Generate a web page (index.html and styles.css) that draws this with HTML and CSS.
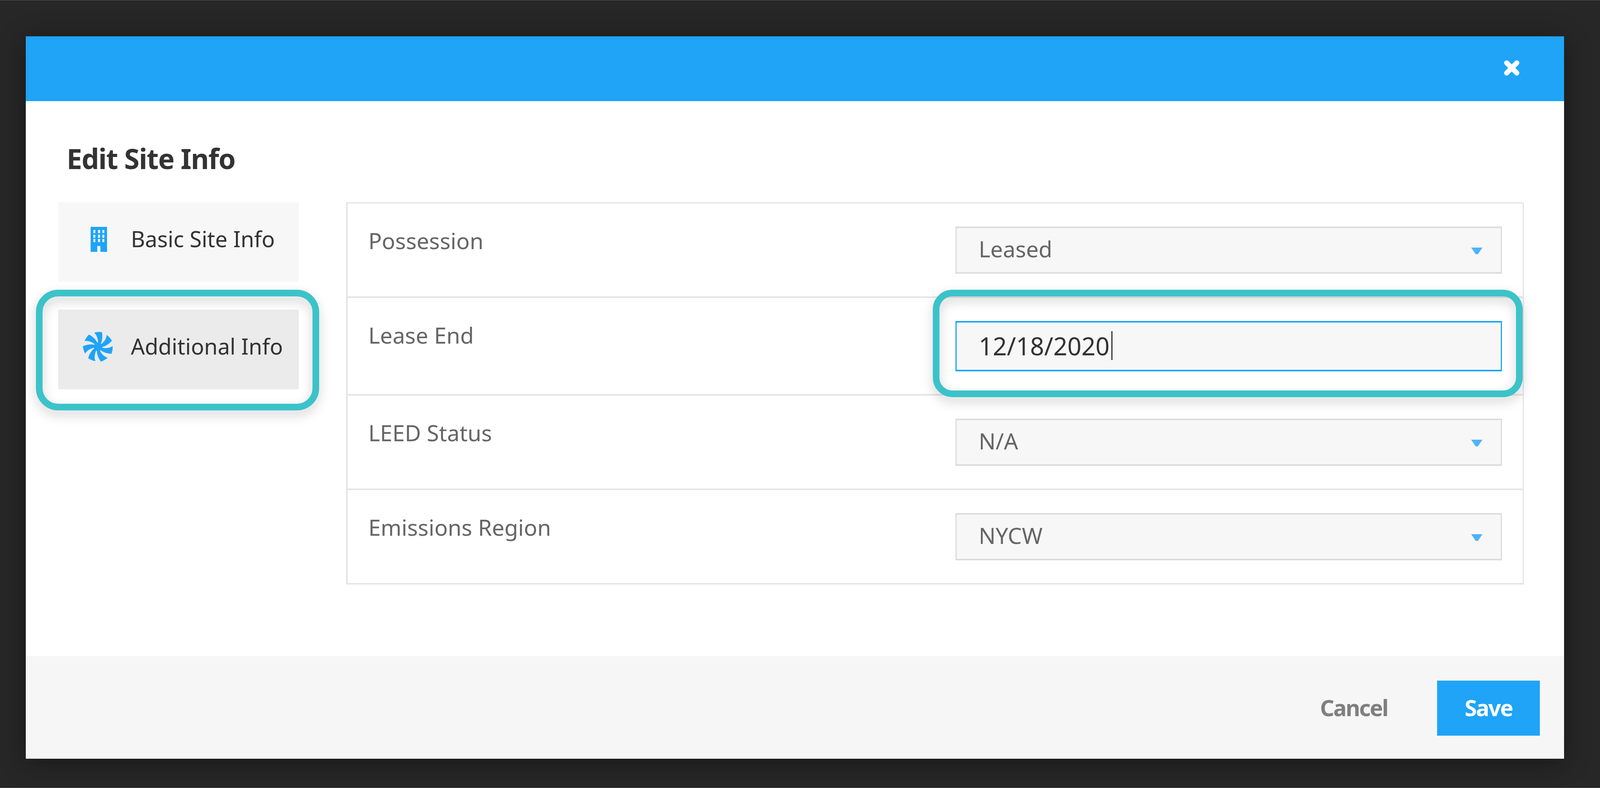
FILE: index.html
```html
<!DOCTYPE html>
<html lang="en">
<head>
    <meta charset="UTF-8">
    <meta name="viewport" content="width=device-width, initial-scale=1.0">
    <title>Edit Site Info</title>
    <link rel="stylesheet" href="styles.css">
</head>
<body>
    <div class="modal">
        <div class="modal-header">
            <svg class="close-icon" viewBox="0 0 40 40">
                <path d="M7 7L33 33M33 7L7 33" stroke="#fff" stroke-width="13" stroke-linecap="round"/>
            </svg>
        </div>

        <div class="modal-body">
            <h2 class="modal-title">Edit Site Info</h2>

            <div class="columns">
                <div class="side-nav">
                    <div class="nav-item">
                        <span class="nav-icon">
                            <svg class="icon-building" viewBox="0 0 42 64">
                                <path fill="#1fa4f8" fill-rule="evenodd" d="M0 0H42V64H25V49H17V64H0ZM7 8V16H12V8ZM19 8V16H24V8ZM30 8V16H35V8ZM7 20V28H12V20ZM19 20V28H24V20ZM30 20V28H35V20ZM7 31V39H12V31ZM19 31V39H24V31ZM30 31V39H35V31Z"/>
                            </svg>
                        </span>
                        <span>Basic Site Info</span>
                    </div>
                    <div class="nav-item nav-item-active">
                        <span class="nav-icon">
                            <svg class="icon-fan" viewBox="-39 -39 78 78">
                                <g fill="#1fa4f8">
                                    <circle r="11"/>
                                    <path id="blade" d="M-10 -36Q0 -39 10 -37.5C12 -26 11 -16 7 -8L0 -10C0 -20 -3 -30 -10 -36Z"/>
                                    <use href="#blade" transform="rotate(51.43)"/>
                                    <use href="#blade" transform="rotate(102.86)"/>
                                    <use href="#blade" transform="rotate(154.29)"/>
                                    <use href="#blade" transform="rotate(205.71)"/>
                                    <use href="#blade" transform="rotate(257.14)"/>
                                    <use href="#blade" transform="rotate(308.57)"/>
                                </g>
                            </svg>
                        </span>
                        <span>Additional Info</span>
                        <div class="callout callout-nav"></div>
                    </div>
                </div>

                <div class="form-table">
                    <div class="form-row">
                        <label>Possession</label>
                        <div class="field select-field">
                            <span>Leased</span>
                            <span class="arrow"></span>
                        </div>
                    </div>
                    <div class="form-row">
                        <label>Lease End</label>
                        <div class="field input-field">
                            <span>12/18/2020</span>
                            <span class="caret"></span>
                            <div class="callout callout-input"></div>
                        </div>
                    </div>
                    <div class="form-row">
                        <label>LEED Status</label>
                        <div class="field select-field">
                            <span>N/A</span>
                            <span class="arrow"></span>
                        </div>
                    </div>
                    <div class="form-row">
                        <label>Emissions Region</label>
                        <div class="field select-field">
                            <span>NYCW</span>
                            <span class="arrow"></span>
                        </div>
                    </div>
                </div>
            </div>
        </div>

        <div class="modal-footer">
            <button class="btn-cancel">Cancel</button>
            <button class="btn-save">Save</button>
        </div>
    </div>
</body>
</html>
```

FILE: styles.css
```css
* {
    box-sizing: border-box;
}

body {
    font-family: "Noto Sans", sans-serif;
    background-color: #272727;
    margin: 0;
    padding: 92px 2.24% 0 1.6%;
    height: 100vh;
    overflow: hidden;
    border-top: 1px solid #555;
    border-bottom: 1px solid #555;
    color: #333;
}

.modal {
    width: 100%;
    background-color: white;
    box-shadow: 0 8px 60px rgba(0, 0, 0, 0.4);
}

.modal-header {
    height: 166px;
    background-color: #1fa4f8;
    display: flex;
    align-items: center;
    justify-content: flex-end;
    padding-right: 2.89%;
}

.close-icon {
    width: 40px;
    height: 40px;
    margin-top: -5px;
}

.modal-body {
    height: 1421px;
    padding: 0 2.62% 0 2.13%;
}

.modal-title {
    margin: 0 0 0 0.56%;
    height: 259px;
    padding-top: 97px;
    font-size: 71px;
    line-height: 100px;
    letter-spacing: -1.5px;
    font-weight: 700;
    color: #333;
}

.columns {
    display: flex;
    justify-content: space-between;
    align-items: flex-start;
}

.side-nav {
    width: 16.42%;
    display: flex;
    flex-direction: column;
    gap: 71px;
}

.nav-item {
    position: relative;
    height: 204px;
    padding: 0 0 18px 10.4%;
    display: flex;
    align-items: center;
    font-size: 56px;
    background-color: #f7f7f7;
    border-radius: 4px;
}

.nav-item-active {
    background-color: #ebebeb;
}

.nav-icon {
    width: 80px;
    margin: 4px 7.5% 0 0;
    display: flex;
    justify-content: center;
}

.icon-building {
    width: 42px;
    height: 64px;
}

.icon-fan {
    width: 78px;
    height: 78px;
    margin-left: -4px;
}

.callout {
    position: absolute;
    border: 17px solid #3bc3c9;
    filter: drop-shadow(0 12px 14px rgba(0, 0, 0, 0.18));
}

.callout-nav {
    left: -9.4%;
    right: -8.4%;
    top: -51px;
    bottom: -54px;
    border-radius: 57px;
}

.callout-input {
    left: -4.4%;
    right: -4%;
    top: -84px;
    bottom: -70px;
    border-radius: 50px;
}

.form-table {
    width: 80.36%;
    border-top: 3px solid #e5e5e5;
    border-left: 4px solid #e5e5e5;
    border-right: 3px solid #e5e5e5;
}

.form-row {
    display: flex;
    justify-content: space-between;
    align-items: flex-start;
    padding: 59px 1.75% 58px;
    border-bottom: 4px solid #e5e5e5;
}

label {
    font-size: 57px;
    line-height: 72px;
    color: #666;
}

.field {
    position: relative;
    width: 48.2%;
    display: flex;
    align-items: center;
    padding-left: 1.93%;
    background-color: #f7f7f7;
    border-style: solid;
    border-width: 4px 3px;
}

.select-field {
    height: 121px;
    justify-content: space-between;
    padding-right: 1.63%;
    padding-bottom: 8px;
    border-color: #dcdcdc;
    font-size: 57px;
    color: #666;
}

.input-field {
    height: 129px;
    padding-bottom: 3px;
    border-color: #1fa4f8;
    font-size: 63px;
    color: #333;
}

.arrow {
    width: 29px;
    height: 17px;
    margin-top: 12px;
    background-color: #4db3fb;
    clip-path: polygon(0 0, 100% 0, 60% 100%, 40% 100%);
}

.caret {
    width: 3px;
    height: 74px;
    margin-left: 4px;
    background-color: #333;
}

.modal-footer {
    height: 263px;
    background-color: #f6f6f6;
    display: flex;
    align-items: center;
    justify-content: flex-end;
    padding: 4px 1.58% 0 0;
}

button {
    font-family: inherit;
    font-size: 57px;
    font-weight: 700;
    letter-spacing: -2.5px;
    border: none;
}

.btn-cancel {
    margin-right: 3.27%;
    padding: 0 0 3px;
    background: none;
    color: #7f7f7f;
}

.btn-save {
    width: 6.78%;
    height: 141px;
    padding: 0 0 3px;
    background-color: #1fa4f8;
    color: white;
}
```
